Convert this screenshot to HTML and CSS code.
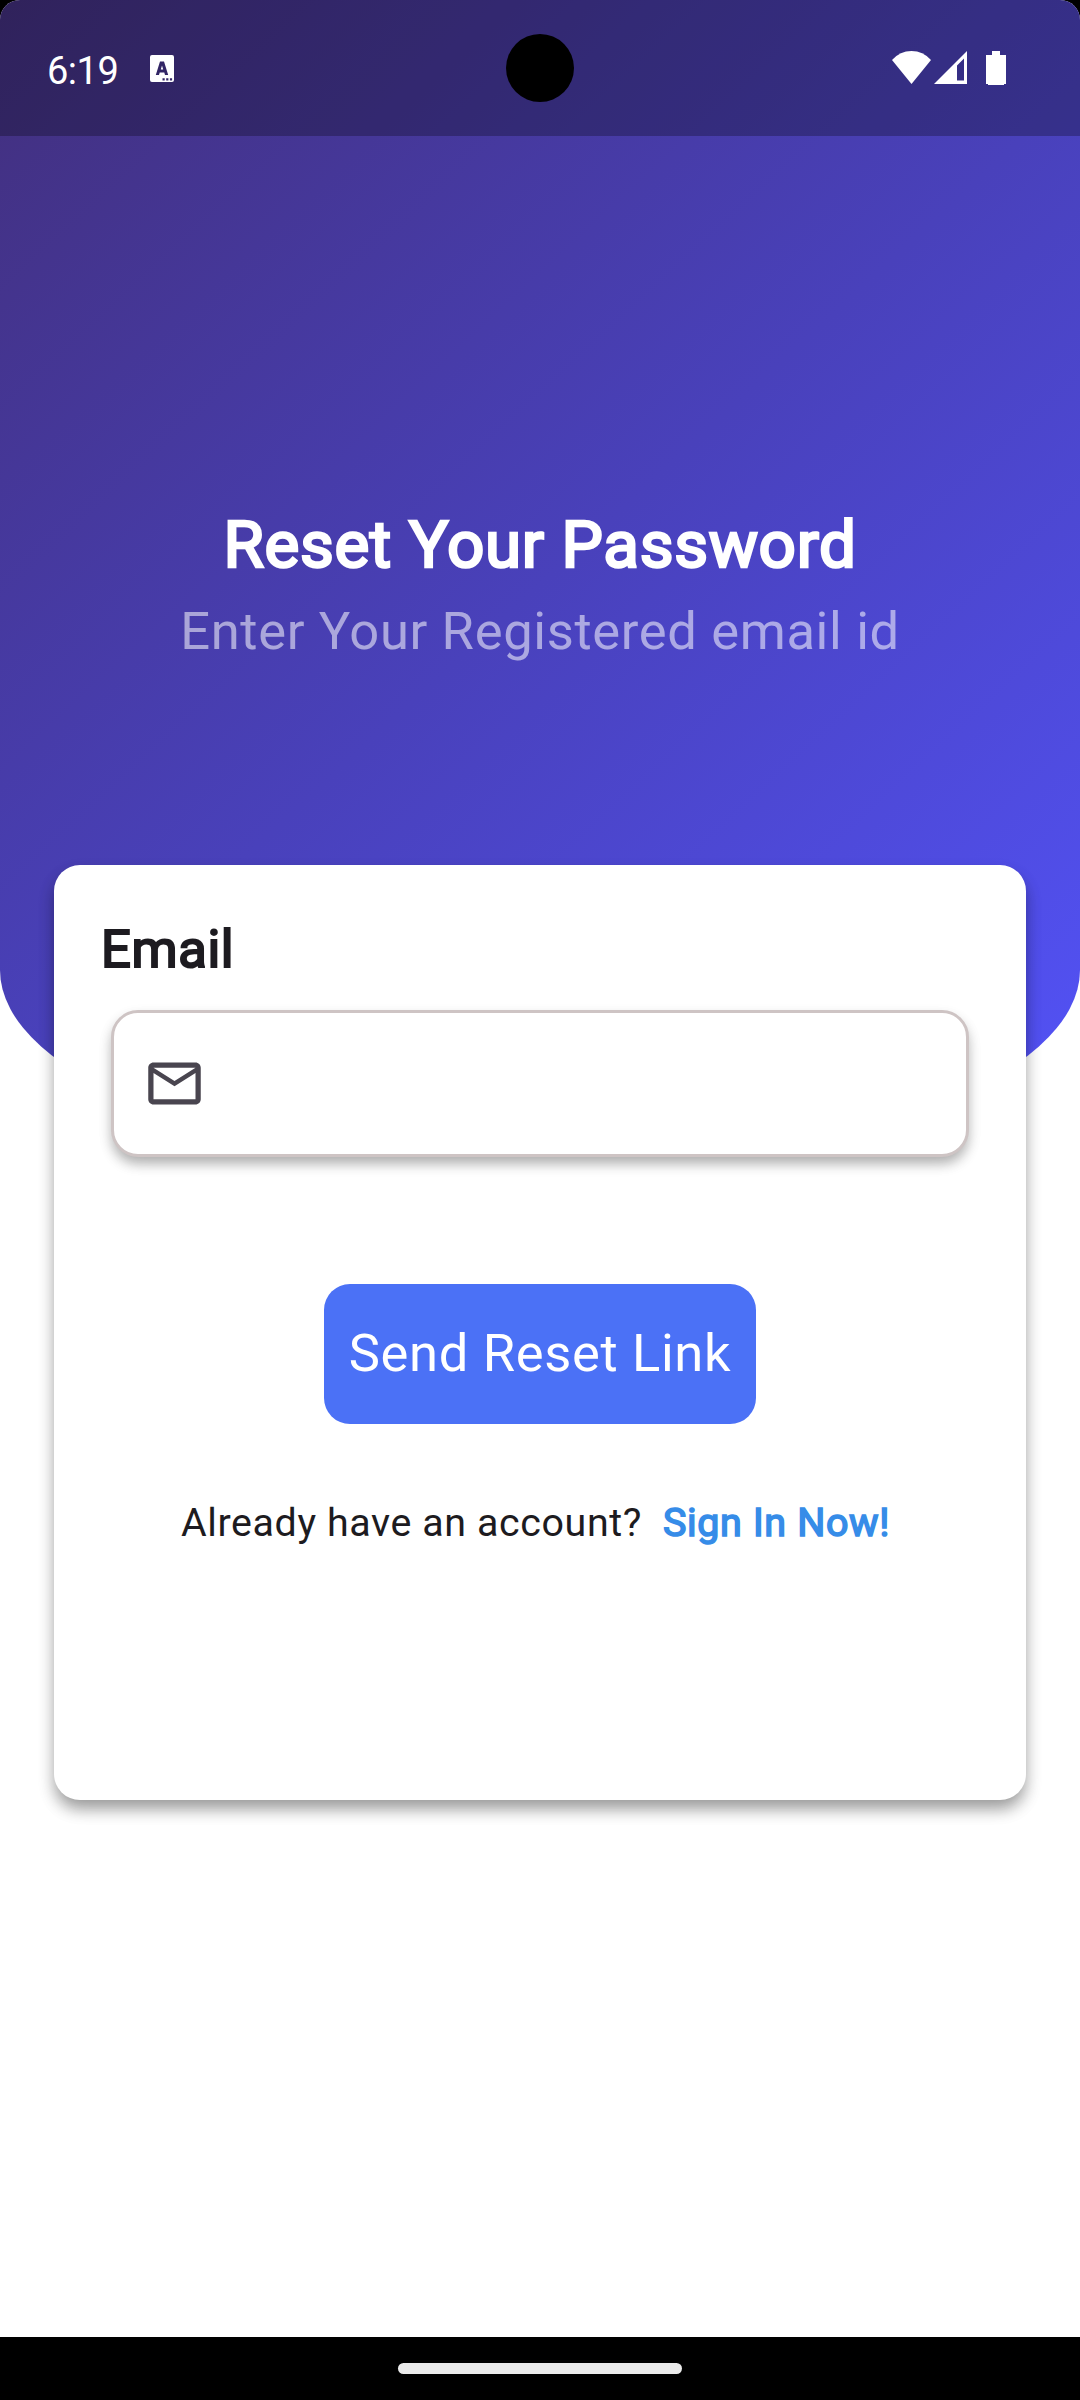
FILE: index.html
```html
<!DOCTYPE html>
<html lang="en">
<head>
<meta charset="utf-8">
<title>Reset Your Password</title>
<link rel="stylesheet" href="styles.css">
</head>
<body>
<div class="screen">
  <div class="status-bar">
    <span class="time">6:19</span>
    <svg class="app-icon" width="24" height="27" viewBox="0 0 24 27">
      <path fill="#fff" fill-rule="evenodd" d="M2 0H22Q24 0 24 2V25Q24 27 22 27H2Q0 27 0 25V2Q0 0 2 0ZM10 6.500 5.800 20H9L9.700 17.500H14.300L15 20H18.200L14 6.500ZM12 10.500 13.200 14.500H10.800ZM12.500 23.200V25.400H14.700V23.200ZM16.200 23.200V25.400H18.400V23.200ZM19.900 23.200V25.400H22.100V23.200Z"/>
    </svg>
    <div class="indicators">
      <svg class="wifi" width="39" height="33" viewBox="0 0 39 33"><path fill="#fff" d="M0 9Q8 0 19.500 0T39 9L19.500 33Z"/></svg>
      <svg class="signal" width="33" height="33" viewBox="0 0 33 33"><path fill="#fff" fill-rule="evenodd" d="M33 0V33H0ZM30 7.500 23 14.500V29.500H30Z"/></svg>
      <svg class="battery" width="20" height="34" viewBox="0 0 20 34"><path fill="#fff" d="M6 0H14V4H20V33H18V34H2V33H0V4H6Z"/></svg>
    </div>
    <span class="camera"></span>
  </div>
  <header class="hero">
    <h1 class="title">Reset Your Password</h1>
    <p class="subtitle">Enter Your Registered email id</p>
  </header>
  <main class="card">
    <label class="label" for="email">Email</label>
    <div class="field">
      <svg width="63" height="63" viewBox="0 0 24 24"><path fill="#49454f" d="M22 6c0-1.100-.9-2-2-2H4c-1.100 0-2 .9-2 2v12c0 1.100.9 2 2 2h16c1.100 0 2-.9 2-2V6zm-2 0l-8 5-8-5h16zm0 12H4V8l8 5 8-5v10z"/></svg>
      <input id="email" class="input" type="email">
    </div>
    <button class="button">Send Reset Link</button>
    <p class="signin"><span class="question">Already have an account?</span><a class="link">Sign In Now!</a></p>
  </main>
  <div class="nav-bar"><span class="handle"></span></div>
</div>
</body>
</html>
```

FILE: styles.css
```css
* { box-sizing: border-box; }
body { margin: 0; background: #000; font-family: Roboto, sans-serif; }
h1, p { margin: 0; }

.screen {
  position: relative;
  display: flex;
  flex-direction: column;
  align-items: center;
  width: 1080px;
  height: 2400px;
  background: #fff;
  border-radius: 20px 20px 0 0;
  overflow: hidden;
}

.status-bar {
  position: absolute;
  inset: 0 0 auto;
  display: flex;
  height: 136px;
  padding-left: 47px;
  background: rgba(0, 0, 0, 0.26);
  color: #fff;
}
.time { width: 103px; padding-top: 48px; font-size: 38px; line-height: 46px; letter-spacing: -0.5px; }
.app-icon { margin-top: 55px; }
.indicators { display: flex; margin: 51px 74px 0 auto; }
.signal { margin: 0 19px 0 3px; }
.camera {
  position: absolute;
  left: 506px;
  top: 34px;
  width: 68px;
  height: 68px;
  border-radius: 50%;
  background: #000;
}

.hero {
  flex: none;
  width: 100%;
  height: 1170px;
  padding-top: 506px;
  border-radius: 0 0 540px 540px / 0 0 200px 200px;
  background: linear-gradient(137.3deg, #422f7c, #4941bb 50%, #5353fa);
  text-align: center;
}
.title {
  font-size: 65.6px;
  line-height: 78px;
  font-weight: 400;
  letter-spacing: 0.66px;
  color: #fff;
  -webkit-text-stroke: 2.6px #fff;
}
.subtitle { margin-top: 16px; font-size: 52.5px; line-height: 62px; letter-spacing: 0.66px; color: rgba(255, 255, 255, 0.54); }

.card {
  flex: none;
  display: flex;
  flex-direction: column;
  width: 972px;
  height: 935px;
  margin-top: -305.5px;
  padding: 53.5px 57px 0;
  border-radius: 26px;
  background: #fff;
  box-shadow: 0 10px 16px -2px rgba(0, 0, 0, 0.32), 0 9px 18px rgba(0, 0, 0, 0.13);
}
.label {
  margin-left: -10px;
  font-size: 52.5px;
  line-height: 62px;
  letter-spacing: 0.66px;
  color: #1d1b20;
  -webkit-text-stroke: 2.1px #1d1b20;
}
.field {
  display: flex;
  align-items: center;
  height: 147px;
  margin-top: 30px;
  padding-left: 29px;
  border: 3px solid #cec4c4;
  border-radius: 27px;
  background: #fff;
  box-shadow: 0 8px 13px -2px rgba(0, 0, 0, 0.26), 0 6px 14px rgba(0, 0, 0, 0.1);
}
.input { flex: 1; margin: 0 24px; border: 0; outline: 0; background: none; font: 42px Roboto, sans-serif; }
.button {
  align-self: center;
  width: 432px;
  height: 140px;
  margin-top: 127px;
  padding: 0 0 2px;
  border: 0;
  border-radius: 26px;
  background: #4b71f6;
  color: #fff;
  font: 52.5px Roboto, sans-serif;
  letter-spacing: 0.66px;
  white-space: nowrap;
}
.signin { display: flex; margin: 76px 0 0 70px; line-height: 46px; white-space: nowrap; }
.question { width: 482px; font-size: 39.4px; letter-spacing: 0.6px; color: #1d1b20; }
.link { font-size: 39.4px; letter-spacing: 0.66px; color: #368ce8; -webkit-text-stroke: 1.6px #368ce8; }

.nav-bar { display: flex; width: 100%; height: 63px; margin-top: auto; padding-top: 26px; justify-content: center; background: #000; }
.handle { width: 284px; height: 11px; border-radius: 6px; background: #ebebeb; }
```
